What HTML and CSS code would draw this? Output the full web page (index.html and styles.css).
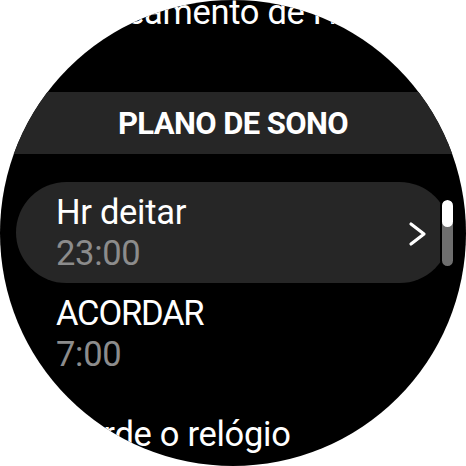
FILE: index.html
```html
<!DOCTYPE html>
<html lang="pt">
<head>
<meta charset="utf-8">
<link rel="stylesheet" href="styles.css">
</head>
<body>
<div class="watch">
  <div class="prev">Rastreamento de HRV</div>
  <div class="header">PLANO DE SONO</div>
  <div class="row row-card">
    <div class="texts">
      <div class="title">Hr deitar</div>
      <div class="value">23:00</div>
    </div>
    <svg class="chev" width="20" height="26" viewBox="0 0 20 26">
      <path d="M3 3 L16 13 L3 23" fill="none" stroke="#fff" stroke-width="3.2" stroke-linecap="round" stroke-linejoin="round"/>
    </svg>
  </div>
  <div class="row">
    <div class="texts">
      <div class="title caps">ACORDAR</div>
      <div class="value">7:00</div>
    </div>
  </div>
  <div class="row row-single">
    <div class="title">Acorde o relógio</div>
  </div>
  <div class="scrollbar"><div class="thumb"></div></div>
</div>
</body>
</html>
```
FILE: styles.css
```css
html, body {
  margin: 0;
  padding: 0;
  background: #fff;
}
.watch {
  position: relative;
  width: 466px;
  height: 466px;
  border-radius: 50%;
  overflow: hidden;
  background: #000;
  color: #fff;
  font-family: Roboto, "Noto Sans", sans-serif;
  font-size: 34.5px;
  line-height: 41px;
  letter-spacing: -0.3px;
}
.prev {
  margin-top: -8px;
  height: 100px;
  padding-left: 47px;
  white-space: nowrap;
}
.header {
  height: 62px;
  background: #262626;
  display: flex;
  align-items: center;
  justify-content: center;
  font-weight: 700;
  font-size: 31px;
  letter-spacing: -0.6px;
  margin-bottom: 28px;
}
.row {
  height: 101px;
  box-sizing: border-box;
  margin: 0 16px;
  padding: 10px 0 0 40px;
  display: flex;
  align-items: flex-start;
}
.row-card {
  background: #262626;
  border-radius: 51px;
  align-items: center;
  padding-top: 0;
}
.row-card .texts {
  flex: 1;
}
.caps {
  letter-spacing: -1.2px;
}
.chev {
  margin-right: 22px;
  margin-top: 2px;
}
.value {
  color: #8c8c8c;
}
.row-single {
  padding-top: 0;
  align-items: center;
  padding-left: 28px;
  white-space: nowrap;
}
.scrollbar {
  position: absolute;
  left: 440px;
  top: 198px;
  width: 11px;
  height: 66px;
  border: 2px solid #000;
  border-radius: 8px;
  background: #6e6e6e;
  overflow: hidden;
}
.thumb {
  height: 27px;
  background: #fff;
  border-radius: 6px;
}
```
